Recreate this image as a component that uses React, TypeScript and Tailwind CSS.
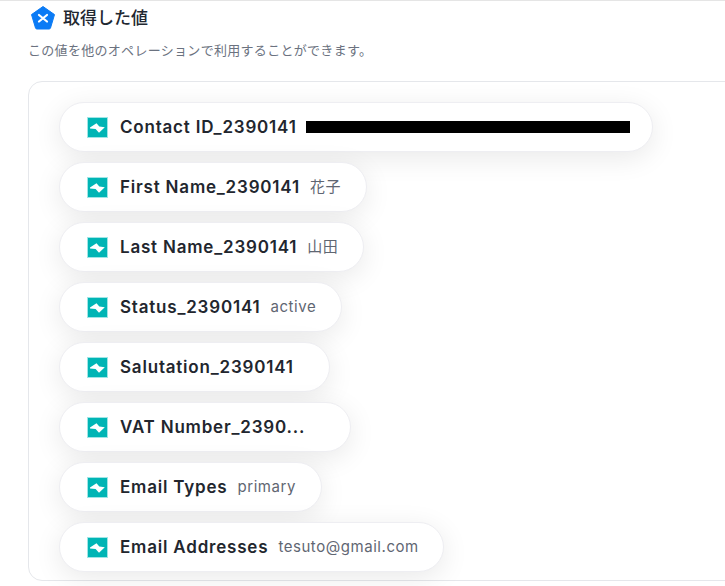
const rows: { name: string; value?: string; redacted?: boolean; w: string }[] = [
  { name: "Contact ID_2390141", redacted: true, w: "w-[594px]" },
  { name: "First Name_2390141", value: "花子", w: "w-[308px]" },
  { name: "Last Name_2390141", value: "山田", w: "w-[305px]" },
  { name: "Status_2390141", value: "active", w: "w-[283px]" },
  { name: "Salutation_2390141", w: "w-[271px]" },
  { name: "VAT Number_2390...", w: "w-[292px]" },
  { name: "Email Types", value: "primary", w: "w-[263px]" },
  { name: "Email Addresses", value: "tesuto@gmail.com", w: "w-[385px]" },
];

function StepIcon() {
  return (
    <svg width="21" height="21" viewBox="0 0 21 21" className="shrink-0">
      <rect x="0.5" y="0.5" width="20" height="20" fill="#00b5b5" stroke="#9fe6e6" strokeWidth="1" />
      <path d="M3 10.5 L9.5 6.2 L12.3 9.6 L17.8 10.2 L12 15.8 L8.6 12 L3 11.6 Z" fill="#ffffff" />
    </svg>
  );
}

function HexIcon() {
  return (
    <svg width="26" height="26" viewBox="0 0 26 26" className="shrink-0">
      <path
        d="M13 1.5 L24.5 9.6 L20.5 23 Q20.2 24 19 24 L7 24 Q5.8 24 5.5 23 L1.5 9.6 Z"
        fill="#0b7bf5"
        stroke="#0b7bf5"
        strokeLinejoin="round"
      />
      <path d="M9 10 L17 16.5 M17 10 L9 16.5" stroke="#ffffff" strokeWidth="2.2" strokeLinecap="round" />
    </svg>
  );
}

export default function App() {
  return (
    <div className="w-[725px] h-[586px] overflow-hidden bg-white border-t border-[#e5e5e5] font-['Inter','Noto_Sans_CJK_JP',sans-serif]">
      <div className="flex items-center gap-[7px] pl-[30px] pt-[3px] h-[30px]">
        <HexIcon />
        <h2 className="text-[17px] leading-[24px] font-medium text-[#222831]">取得した値</h2>
      </div>
      <p className="pl-[28px] mt-[9px] text-[13px] leading-[20px] tracking-[0.3px] text-[#6b7280]">
        この値を他のオペレーションで利用することができます。
      </p>
      <div className="ml-[28px] mt-[21px] w-[720px] h-[500px] rounded-[14px] border border-[#e5e7eb] pl-[30px] pt-[20px] flex flex-col gap-[10px]">
        {rows.map((r) => (
          <div
            key={r.name}
            className={`${r.w} h-[50px] shrink-0 rounded-full border border-[#eeeef2] bg-white pl-[27px] flex items-center shadow-[0_6px_28px_rgba(0,0,0,0.09)]`}
          >
            <StepIcon />
            <span className="ml-[12px] text-[17px] leading-[24px] font-semibold tracking-[0.8px] text-[#22262e] whitespace-nowrap">
              {r.name}
            </span>
            {r.value && (
              <span className="ml-[10px] text-[15px] tracking-[0.55px] text-[#5f6672] whitespace-nowrap">{r.value}</span>
            )}
            {r.redacted && <span className="ml-[9px] w-[324px] h-[12px] bg-black" />}
          </div>
        ))}
      </div>
    </div>
  );
}
